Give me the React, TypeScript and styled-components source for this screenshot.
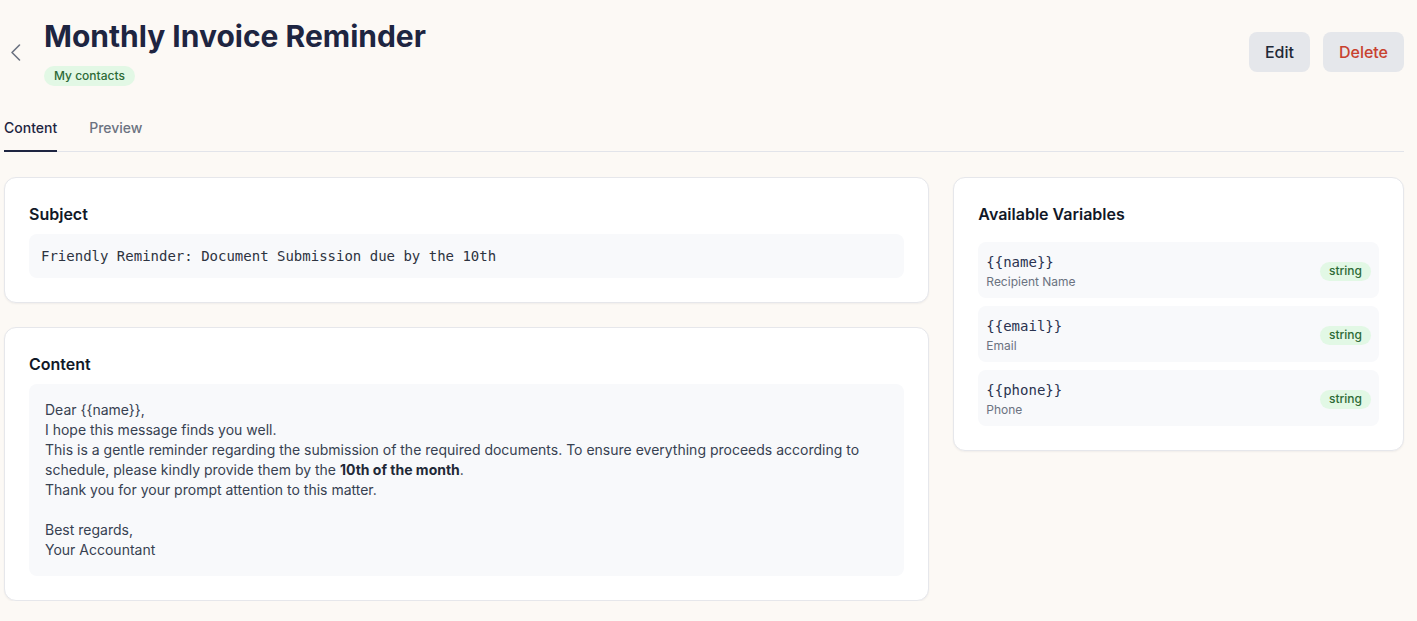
import React from "react";
import styled, { createGlobalStyle } from "styled-components";

const GlobalStyle = createGlobalStyle`
  * { box-sizing: border-box; }
  html, body { margin: 0; padding: 0; background: #fcf9f5; }
  body {
    font-family: Inter, "Noto Sans", sans-serif;
    color: #111827;
    -webkit-font-smoothing: antialiased;
  }
`;

const Page = styled.div`
  width: 1400px;
  margin-left: 4px;
  padding-top: 18px;
`;

const Header = styled.header`
  display: flex;
  align-items: center;
  justify-content: space-between;
`;

const TitleArea = styled.div`
  display: flex;
  align-items: center;
  gap: 16px;
`;

const BackButton = styled.button`
  width: 24px;
  height: 24px;
  padding: 0;
  margin: 0;
  border: none;
  background: transparent;
  display: flex;
  align-items: center;
  justify-content: center;
  color: #6b7280;
  cursor: pointer;
  position: relative;
  top: 0px;
`;

const TitleBlock = styled.div`
  display: flex;
  flex-direction: column;
  align-items: flex-start;
`;

const Title = styled.h1`
  margin: 0;
  font-size: 30px;
  line-height: 36px;
  font-weight: 700;
  color: #1e2541;
  letter-spacing: 0;
`;

const Pill = styled.span`
  display: inline-flex;
  align-items: center;
  height: 20px;
  padding: 0 10px;
  border-radius: 999px;
  background: #e2f8e5;
  color: #2d6a37;
  font-size: 12px;
  font-weight: 500;
  line-height: 16px;
`;

const TitlePill = styled(Pill)`
  margin-top: 12px;
`;

const Actions = styled.div`
  display: flex;
  gap: 13px;
`;

const ActionButton = styled.button<{ $danger?: boolean }>`
  height: 40px;
  padding: 0 16px;
  border: none;
  border-radius: 8px;
  background: #e5e7eb;
  color: ${(p) => (p.$danger ? "#c8412e" : "#1f2937")};
  font-family: Inter, sans-serif;
  font-size: 16px;
  font-weight: 500;
  cursor: pointer;
`;

const TabList = styled.div`
  display: flex;
  gap: 32px;
  margin-top: 32px;
  border-bottom: 1px solid #e2e4ea;
`;

const Tab = styled.button<{ $active?: boolean }>`
  padding: 0 0 12px;
  margin: 0 0 -1px;
  border: none;
  border-bottom: 2px solid ${(p) => (p.$active ? "#1e2541" : "transparent")};
  background: transparent;
  font-family: Inter, sans-serif;
  font-size: 14px;
  line-height: 20px;
  font-weight: 500;
  color: ${(p) => (p.$active ? "#1e2541" : "#6b7280")};
  cursor: pointer;
`;

const Grid = styled.div`
  display: grid;
  grid-template-columns: repeat(3, 1fr);
  gap: 24px;
  margin-top: 25px;
  align-items: start;
`;

const MainColumn = styled.div`
  grid-column: span 2;
  display: flex;
  flex-direction: column;
  gap: 24px;
`;

const Card = styled.section`
  background: #ffffff;
  border: 1px solid #e6e7eb;
  border-radius: 12px;
  box-shadow: 0 1px 2px rgba(16, 24, 40, 0.05);
  padding: 24px;
`;

const CardTitle = styled.h2<{ $gap?: number }>`
  margin: 0 0 ${(p) => p.$gap ?? 8}px;
  font-size: 16px;
  line-height: 24px;
  font-weight: 600;
  color: #111827;
`;

const SubjectBox = styled.div`
  background: #f8f9fb;
  border-radius: 8px;
  padding: 12px;
  font-family: "DejaVu Sans Mono", "Liberation Mono", monospace;
  font-size: 14px;
  line-height: 20px;
  color: #2d3340;
`;

const BodyBox = styled.div`
  background: #f8f9fb;
  border-radius: 8px;
  padding: 16px;
  font-size: 14px;
  line-height: 20px;
  color: #374151;

  p {
    margin: 0;
  }
  strong {
    font-weight: 700;
    color: #1f2937;
  }
`;

const Blank = styled.div`
  height: 20px;
`;

const VarList = styled.div`
  display: flex;
  flex-direction: column;
  gap: 8px;
`;

const VarRow = styled.div`
  display: flex;
  align-items: center;
  justify-content: space-between;
  background: #f8f9fb;
  border-radius: 8px;
  padding: 10px 8px 8px;
`;

const VarInfo = styled.div`
  display: flex;
  flex-direction: column;
  gap: 2px;
`;

const VarName = styled.span`
  font-family: "DejaVu Sans Mono", "Liberation Mono", monospace;
  font-size: 14px;
  line-height: 20px;
  color: #2a3350;
`;

const VarDesc = styled.span`
  font-size: 12px;
  line-height: 16px;
  color: #6b7280;
`;

const TypePill = styled(Pill)`
  height: 19px;
  padding: 0 9px;
`;

const variables = [
  { name: "{{name}}", desc: "Recipient Name" },
  { name: "{{email}}", desc: "Email" },
  { name: "{{phone}}", desc: "Phone" },
];

export default function App() {
  return (
    <>
      <GlobalStyle />
      <Page>
        <Header>
          <TitleArea>
            <BackButton aria-label="Back">
              <svg width="24" height="24" viewBox="0 0 24 24" fill="none">
                <polyline
                  points="15.5,5 8,12.5 15.5,20"
                  stroke="currentColor"
                  strokeWidth="1.6"
                  strokeLinecap="round"
                  strokeLinejoin="round"
                />
              </svg>
            </BackButton>
            <TitleBlock>
              <Title>Monthly Invoice Reminder</Title>
              <TitlePill>My contacts</TitlePill>
            </TitleBlock>
          </TitleArea>
          <Actions>
            <ActionButton>Edit</ActionButton>
            <ActionButton $danger>Delete</ActionButton>
          </Actions>
        </Header>

        <TabList>
          <Tab $active>Content</Tab>
          <Tab>Preview</Tab>
        </TabList>

        <Grid>
          <MainColumn>
            <Card>
              <CardTitle>Subject</CardTitle>
              <SubjectBox>Friendly Reminder: Document Submission due by the 10th</SubjectBox>
            </Card>
            <Card>
              <CardTitle>Content</CardTitle>
              <BodyBox>
                <p>Dear {"{{name}}"},</p>
                <p>I hope this message finds you well.</p>
                <p>
                  This is a gentle reminder regarding the submission of the required documents. To ensure
                  everything proceeds according to schedule, please kindly provide them by the{" "}
                  <strong>10th of the month</strong>.
                </p>
                <p>Thank you for your prompt attention to this matter.</p>
                <Blank />
                <p>Best regards,</p>
                <p>Your Accountant</p>
              </BodyBox>
            </Card>
          </MainColumn>
          <Card>
            <CardTitle $gap={16}>Available Variables</CardTitle>
            <VarList>
              {variables.map((v) => (
                <VarRow key={v.name}>
                  <VarInfo>
                    <VarName>{v.name}</VarName>
                    <VarDesc>{v.desc}</VarDesc>
                  </VarInfo>
                  <TypePill>string</TypePill>
                </VarRow>
              ))}
            </VarList>
          </Card>
        </Grid>
      </Page>
    </>
  );
}
